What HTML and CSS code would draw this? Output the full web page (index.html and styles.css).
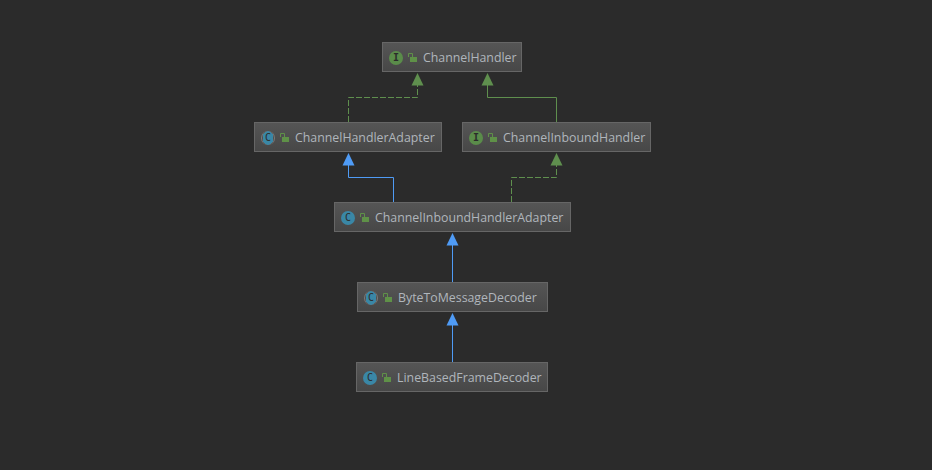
FILE: index.html
```html
<!DOCTYPE html>
<html lang="en">
<head>
<meta charset="utf-8">
<title>Class hierarchy</title>
<link rel="stylesheet" href="styles.css">
</head>
<body>
<main class="diagram">
  <svg class="edges" width="932" height="470" viewBox="0 0 932 470" aria-hidden="true">
    <path class="line green dashed" d="M348.5 122V97.5H417.5V85"/>
    <path class="head green-fill" d="M417.500 73L423.500 85.500H411.500Z"/>
    <path class="line green" d="M556.5 122V97.5H487.5V85"/>
    <path class="head green-fill" d="M487.500 73L493.500 85.500H481.500Z"/>
    <path class="line blue" d="M393.5 202V177.5H348.5V165"/>
    <path class="head blue-fill" d="M348.500 153L354.500 165.500H342.500Z"/>
    <path class="line green dashed" d="M511.5 202V177.5H556.5V165"/>
    <path class="head green-fill" d="M556.500 153L562.500 165.500H550.500Z"/>
    <path class="line blue" d="M452.5 282V245"/>
    <path class="head blue-fill" d="M452.500 233L458.500 245.500H446.500Z"/>
    <path class="line blue" d="M452.5 362V325"/>
    <path class="head blue-fill" d="M452.500 313L458.500 325.500H446.500Z"/>
  </svg>

  <div class="node node-handler">
    <span class="kind interface">I</span>
    <svg class="lock" width="9" height="9" viewBox="0 0 9 9" aria-hidden="true"><path class="shackle" d="M0.500 4V0.500H4.500V4"/><rect class="body" x="2" y="4" width="7" height="5"/></svg>
    <span class="name">ChannelHandler</span>
  </div>
  <div class="node node-adapter">
    <span class="kind cls abstract">C</span>
    <svg class="lock" width="9" height="9" viewBox="0 0 9 9" aria-hidden="true"><path class="shackle" d="M0.500 4V0.500H4.500V4"/><rect class="body" x="2" y="4" width="7" height="5"/></svg>
    <span class="name">ChannelHandlerAdapter</span>
  </div>
  <div class="node node-inbound">
    <span class="kind interface">I</span>
    <svg class="lock" width="9" height="9" viewBox="0 0 9 9" aria-hidden="true"><path class="shackle" d="M0.500 4V0.500H4.500V4"/><rect class="body" x="2" y="4" width="7" height="5"/></svg>
    <span class="name">ChannelInboundHandler</span>
  </div>
  <div class="node node-inbound-adapter">
    <span class="kind cls">C</span>
    <svg class="lock" width="9" height="9" viewBox="0 0 9 9" aria-hidden="true"><path class="shackle" d="M0.500 4V0.500H4.500V4"/><rect class="body" x="2" y="4" width="7" height="5"/></svg>
    <span class="name">ChannelInboundHandlerAdapter</span>
  </div>
  <div class="node node-byte">
    <span class="kind cls abstract">C</span>
    <svg class="lock" width="9" height="9" viewBox="0 0 9 9" aria-hidden="true"><path class="shackle" d="M0.500 4V0.500H4.500V4"/><rect class="body" x="2" y="4" width="7" height="5"/></svg>
    <span class="name">ByteToMessageDecoder</span>
  </div>
  <div class="node node-line">
    <span class="kind cls">C</span>
    <svg class="lock" width="9" height="9" viewBox="0 0 9 9" aria-hidden="true"><path class="shackle" d="M0.500 4V0.500H4.500V4"/><rect class="body" x="2" y="4" width="7" height="5"/></svg>
    <span class="name">LineBasedFrameDecoder</span>
  </div>
</main>
</body>
</html>
```
FILE: styles.css
```css
* { box-sizing: border-box; }
html, body { margin: 0; padding: 0; background: #2b2b2b; }
.diagram { position: relative; width: 932px; height: 470px; overflow: hidden; background: #2b2b2b; }
.edges { position: absolute; left: 0; top: 0; }
.line { fill: none; stroke-width: 1; }
.green { stroke: #5f8f4e; }
.blue { stroke: #4f9bf5; }
.dashed { stroke-dasharray: 6 2; }
.green-fill { fill: #5f8f4e; }
.blue-fill { fill: #4f9bf5; }

.node {
  position: absolute;
  height: 30px;
  display: flex;
  align-items: center;
  padding-left: 6px;
  background: linear-gradient(#555, #474747);
  border: 1px solid #666;
  font: 12.35px "Open Sans", sans-serif;
  color: #b0b6bc;
  white-space: nowrap;
}
.node-handler { left: 382px; top: 42px; width: 140px; }
.node-adapter { left: 254px; top: 122px; width: 188px; }
.node-inbound { left: 462px; top: 122px; width: 189px; }
.node-inbound-adapter { left: 334px; top: 202px; width: 237px; }
.node-byte { left: 357px; top: 282px; width: 191px; }
.node-line { left: 356px; top: 362px; width: 192px; }

.kind {
  position: relative;
  flex: none;
  width: 14px;
  height: 14px;
  margin-top: 1px;
  border-radius: 50%;
  display: flex;
  align-items: center;
  justify-content: center;
  font: 10px "DejaVu Sans Mono", monospace;
  color: #2b2b2b;
}
.interface { background: #5a8c4a; font-weight: bold; }
.cls { background: #3a87a6; }
.abstract { background: radial-gradient(ellipse 5.5px 7px at center, #3a87a6 96%, transparent 100%); }
.abstract::before {
  content: "";
  position: absolute;
  inset: 0;
  border-radius: 50%;
  border-left: 1px solid #7c7c7c;
  border-right: 1px solid #7c7c7c;
}
.lock { flex: none; margin: 1px 6px 0 5px; }
.shackle { fill: none; stroke: #5f9148; stroke-width: 1; }
.body { fill: #5f9148; }
```
